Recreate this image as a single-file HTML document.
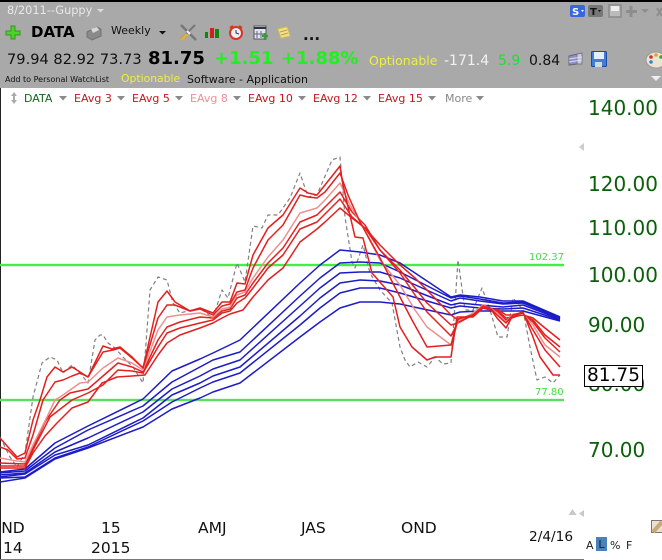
<!DOCTYPE html>
<html><head><meta charset="utf-8">
<style>
html,body{margin:0;padding:0;background:#fff}
#p{position:relative;width:662px;height:560px;overflow:hidden;background:#fff;font-family:"DejaVu Sans","Liberation Sans",sans-serif}
#p span{position:absolute;white-space:nowrap;line-height:1}
.ax{color:#0b5f0b;font-size:20px;left:588px}
.lg{font-size:11px;top:93px;color:#c8141e}
</style></head><body><div id="p">
<div style="position:absolute;left:0;top:0;width:662px;height:2px;background:#000"></div>
<div style="position:absolute;left:0;top:2px;width:662px;height:86px;background:#a9a9a9"></div>
<div style="position:absolute;left:0;top:88px;width:1px;height:472px;background:#222"></div>
<div style="position:absolute;left:0;top:559px;width:584px;height:1px;background:#777"></div>

<span style="left:7px;top:5px;font-size:11.3px;color:#e8e8e8">8/2011--Guppy</span>
<span style="left:31px;top:25px;font-size:15px;font-weight:bold;color:#000">DATA</span>
<span style="left:111px;top:25px;font-size:11px;color:#111">Weekly</span>
<span style="left:303px;top:28px;font-size:15px;font-weight:bold;color:#111">...</span>
<span style="left:7px;top:53px;font-size:14.6px;color:#111">79.94 82.92 73.73</span>
<span style="left:148px;top:50px;font-size:18px;font-weight:bold;color:#000">81.75</span>
<span style="left:214px;top:50px;font-size:18px;font-weight:bold;color:#22ee22">+1.51</span>
<span style="left:281px;top:50px;font-size:18px;font-weight:bold;color:#22ee22">+1.88%</span>
<span style="left:369px;top:55px;font-size:12.5px;color:#eeee44">Optionable</span>
<span style="left:444px;top:54px;font-size:14px;color:#f2f2f2">-171.4</span>
<span style="left:498px;top:54px;font-size:14px;color:#22dd33">5.9</span>
<span style="left:529px;top:54px;font-size:14px;color:#111">0.84</span>
<span style="left:5px;top:76px;font-size:8px;color:#111">Add to Personal WatchList</span>
<span style="left:121px;top:74px;font-size:10.8px;color:#eeee44">Optionable</span>
<span style="left:187px;top:74px;font-size:11px;color:#111">Software - Application</span>

<span class="lg" style="left:24px;color:#0a6a1a">DATA</span>
<span class="lg" style="left:74px">EAvg 3</span>
<span class="lg" style="left:132px">EAvg 5</span>
<span class="lg" style="left:190px;color:#ee8f96">EAvg 8</span>
<span class="lg" style="left:248px">EAvg 10</span>
<span class="lg" style="left:313px">EAvg 12</span>
<span class="lg" style="left:378px">EAvg 15</span>
<span class="lg" style="left:445px;color:#888">More</span>

<span class="ax" style="top:98px">140.00</span>
<span class="ax" style="top:174px">120.00</span>
<span class="ax" style="top:218px">110.00</span>
<span class="ax" style="top:265px">100.00</span>
<span class="ax" style="top:315px">90.00</span>
<span class="ax" style="top:374px">80.00</span>
<span class="ax" style="top:440px">70.00</span>
<span style="left:584px;top:365px;width:57px;height:20px;border:1px solid #000;background:#fff;font-size:18.5px;line-height:20px;text-align:center;color:#000">81.75</span>

<span style="left:529px;top:253px;font-size:10px;color:#44dd44">102.37</span>
<span style="left:535px;top:388px;font-size:10px;color:#44dd44">77.80</span>

<span style="left:-11px;top:521px;font-size:15.5px;color:#111">OND</span>
<span style="left:3px;top:541px;font-size:15.5px;color:#111">14</span>
<span style="left:101px;top:521px;font-size:15.5px;color:#111">15</span>
<span style="left:91px;top:541px;font-size:15.5px;color:#111">2015</span>
<span style="left:198px;top:521px;font-size:15.5px;color:#111">AMJ</span>
<span style="left:301px;top:521px;font-size:15.5px;color:#111">JAS</span>
<span style="left:401px;top:521px;font-size:15.5px;color:#111">OND</span>
<span style="left:529px;top:531px;font-size:13.7px;color:#111">2/4/16</span>
<span style="left:586px;top:540px;font-size:11px;color:#222">A</span>
<span style="left:596px;top:537px;width:11px;height:14px;background:#4a82b8;font-size:11px;line-height:15px;text-align:center;color:#123">L</span>
<span style="left:610px;top:540px;font-size:11px;color:#222">%</span>
<span style="left:626px;top:540px;font-size:11px;color:#222">F</span>

<svg width="662" height="560" style="position:absolute;left:0;top:0">
<!-- header icons -->
<path d="M11 26h4v5h5v4h-5v4h-4v-4H6v-4h5z" fill="#4fd02a" stroke="#2f9a1c" stroke-width="1"/>
<path d="M87 32l10-5 4 2v7l-9 4-5-3z" fill="#8a8a8a" stroke="#727272"/><path d="M91 29l6-2 2 3-6 3z" fill="#d8d8d8"/>
<path d="M159 31h7l-3.500 3.500z" fill="#111"/><path d="M97 9h7l-3.500 3.500z" fill="#ddd"/>
<path d="M181 25l6 6M190 34l6 6" stroke="#777" stroke-width="2.500" fill="none"/><path d="M195 25l-14 14" stroke="#777" stroke-width="2"/><path d="M181 40l6-6" stroke="#e0b030" stroke-width="3"/><path d="M187 31l3 3" stroke="#eee" stroke-width="2"/>
<rect x="205" y="32" width="3" height="6" fill="#0a8a0a"/><rect x="210" y="28" width="4" height="10" fill="#d02020"/><rect x="215" y="29" width="4" height="9" fill="#0a8a0a"/>
<circle cx="236" cy="33" r="6" fill="#eef" stroke="#d8351a" stroke-width="2"/><path d="M236 30v3l3 1" stroke="#333" fill="none"/><path d="M230 28l3-2M242 28l-3-2" stroke="#d8351a" stroke-width="2"/>
<rect x="254" y="26" width="12" height="13" fill="#dfe6f0" stroke="#556"/><path d="M254 28h12" stroke="#334" stroke-width="2"/><path d="M257 31v7M261 31v7M254 34h12" stroke="#667"/><path d="M262 36h6M265 33v7" stroke="#3a9a3a" stroke-width="2.500"/>
<path d="M278 29l9-2 3 9-9 2z" fill="#f1e28a" stroke="#d6c050"/><path d="M280 32l7-2M281 35l7-2" stroke="#b8a040"/>
<rect x="570" y="5" width="15" height="12" rx="2" fill="#3a66dd"/><text x="572" y="15" font-size="10" font-weight="bold" fill="#fff" font-family="DejaVu Sans">S</text><path d="M581 10h3l-1.500 2z" fill="#fff"/>
<rect x="588" y="5" width="15" height="12" rx="2" fill="#777"/><text x="590" y="15" font-size="10" font-weight="bold" fill="#111" font-family="DejaVu Sans">T</text><path d="M598 10h3l-1.500 2z" fill="#111"/>
<rect x="609" y="5" width="12" height="12" fill="#bbb" stroke="#8a8a8a" stroke-width="1.500"/><rect x="611" y="6" width="8" height="5" fill="#eee"/>
<path d="M631 6v11M626 11.500h11" stroke="#8d8d8d" stroke-width="3"/><path d="M641 9h8l-4 4z" fill="#8d8d8d"/><path d="M657 8l5 8M662 8l-5 8" stroke="#8d8d8d" stroke-width="2"/>
<path d="M569 56l8-2v10l-8 1z" fill="#8f8fc8" stroke="#667"/><path d="M577 54l5-1v11l-5 0z" fill="#c8c8e6" stroke="#778"/><path d="M569 59l13-2M569 62l13-2" stroke="#dde"/>
<rect x="591.500" y="51.500" width="15" height="15" rx="1" fill="#3f7fdc" stroke="#224a99"/><rect x="594" y="52" width="10" height="7" fill="#e6eefc"/><rect x="595" y="62" width="7" height="5" fill="#cdd"/>
<ellipse cx="656" cy="60" rx="10" ry="8" fill="#ece4d0" stroke="#999"/><circle cx="651" cy="57" r="1.800" fill="#c33"/><circle cx="656" cy="55" r="1.800" fill="#ca3"/><circle cx="661" cy="57" r="1.800" fill="#3a3"/><circle cx="651" cy="62" r="1.800" fill="#38c"/>
<path d="M651 76h10l-5 5z" fill="#eee"/>
<!-- legend -->
<path d="M14 92l-3 4h6zM14 104l-3-4h6z" fill="#aaa"/><rect x="13" y="95" width="2" height="6" fill="#aaa"/>
<g fill="#8a8a8a"><path d="M59 96h8l-4 4.500zM117 96h8l-4 4.500zM175 96h8l-4 4.500zM233 96h8l-4 4.500zM298 96h8l-4 4.500zM363 96h8l-4 4.500zM428 96h8l-4 4.500zM476 96h8l-4 4.500z"/></g>
<path d="M584 143l-5 4 5 4z" fill="#ccc"/>
<path d="M572.500 509l-4 6h8zM584 510l-5 3.500 5 3.500z" fill="#c8c8c8"/>
<rect x="651.500" y="520.500" width="11" height="12" fill="#e8e0d0" stroke="#777"/><path d="M653 532l9-10" stroke="#c9a872" stroke-width="4"/>

<!-- green lines -->
<rect x="0" y="263" width="564" height="4" fill="#44ee44" opacity=".2"/>
<rect x="0" y="264" width="564" height="2" fill="#44ee44"/>
<rect x="0" y="398" width="564" height="4" fill="#5ae05a" opacity=".2"/>
<rect x="0" y="399" width="564" height="2" fill="#5ae05a"/>

<g fill="none" stroke-linejoin="round">
<polyline stroke="#808080" stroke-width="1.200" stroke-dasharray="4 3" points="0,437 10,457 17,467 25,453 33,397 42,363 50,357 57,360 63,373 72,365 80,373 88,383 95,340 100,335 103,335 108,343 115,348 123,357 133,367 143,383 150,290 158,277 167,280 173,303 180,313 200,308 213,318 222,290 228,298 237,263 245,282 253,226 262,228 268,215 278,215 290,198 300,173 308,197 317,195 332,160 340,157 345,217 352,262 355,268 363,245 370,273 380,290 392,303 400,347 405,360 410,367 418,362 427,367 435,357 443,364 451,363 458,260 465,310 473,310 482,288 490,310 498,337 507,337 513,298 523,310 530,347 537,380 545,377 553,383 560,375"/>

<g stroke="#1c1cc8" stroke-width="1.500">
<polyline points="0,472 25,469 55,443 88,426 143,399 172,371 200,359 213,353 240,340 300,283 320,265 340,250 360,252 380,255 400,263 451,297 460,295 480,297 503,301 523,301 560,317"/>
<polyline points="0,473 25,471 55,448 88,430 143,406 172,382 200,367 213,360 240,352 300,296 320,278 340,263 360,262 380,263 400,272 451,298 460,296 480,299 503,303 523,302 560,318"/>
<polyline points="0,475 25,473 55,452 88,438 143,412 172,389 200,376 213,369 240,360 300,306 320,288 340,273 360,272 380,272 400,278 451,301 460,298 480,301 503,304 523,303 560,318"/>
<polyline points="0,477 25,474 55,455 88,445 143,418 172,395 200,383 213,376 240,367 300,316 320,298 340,283 360,280 380,281 400,285 451,305 460,303 480,305 503,307 523,305 560,319"/>
<polyline points="0,478 25,477 55,458 88,447 143,421 172,402 200,388 213,382 240,373 300,325 320,308 340,293 360,288 380,288 400,293 451,308 460,306 480,308 503,309 523,308 560,320"/>
<polyline points="0,482 25,478 55,459 88,448 143,427 172,409 200,398 213,392 240,383 300,337 320,322 340,308 360,302 380,302 400,304 451,315 460,312 480,311 503,311 523,311 560,321"/>
</g>

<g stroke="#e2201f" stroke-width="1.500">
<polyline points="0,468 25,468 33,453 45,436 57,423 72,408 88,402 102,383 117,377 132,376 145,375 158,355 167,343 180,335 200,328 213,323 222,318 230,314 243,310 253,297 268,280 283,268 300,242 317,229 325,222 340,208 352,218 365,228 380,245 400,265 415,278 427,290 451,315 458,320 473,316 483,308 490,310 497,309 506,315 523,315 533,318 545,328 560,340"/>
<polyline points="0,466 25,466 33,450 50,417 72,400 88,393 103,385 118,370 132,371 143,373 158,347 167,333 180,328 200,323 213,320 222,313 230,311 237,303 245,298 253,288 268,268 283,255 300,229 317,222 325,214 340,199 352,217 365,228 380,250 400,270 415,288 427,303 451,325 458,323 473,315 483,306 490,309 497,310 506,318 523,315 533,320 545,335 560,347"/>
<polyline points="0,463 25,464 33,448 45,422 60,400 70,393 88,389 103,376 118,363 132,367 143,372 158,340 167,327 180,322 200,317 213,318 222,311 230,309 237,298 245,295 253,283 268,263 283,248 300,222 317,215 325,207 340,192 352,212 365,225 380,250 400,273 415,295 427,312 451,336 458,322 473,314 483,305 490,308 497,311 506,320 523,314 533,322 545,338 560,352"/>
<polyline stroke="#ef8f8f" points="0,458 17,461 25,462 33,445 47,417 55,400 63,395 80,383 88,382 103,368 118,358 132,363 143,370 158,330 167,317 180,315 200,313 213,317 222,309 230,307 237,295 245,292 253,278 268,257 283,240 300,213 317,208 325,200 340,183 350,205 362,225 380,260 400,285 415,310 427,327 451,345 458,321 473,313 483,305 490,308 497,313 506,322 513,314 523,314 533,325 545,345 560,357"/>
<polyline points="0,447 8,450 17,459 25,458 33,435 43,400 55,382 63,380 72,376 80,373 88,377 103,352 113,350 120,348 132,358 143,368 158,318 167,305 175,305 190,311 200,309 213,315 222,306 230,304 237,292 245,290 253,268 268,240 283,225 300,195 308,197 317,198 325,192 340,173 348,195 360,222 380,258 400,297 412,320 427,347 451,345 458,319 473,315 483,306 490,308 497,315 506,323 513,315 523,313 533,330 545,350 560,367"/>
<polyline points="0,438 8,447 17,457 25,453 33,420 40,400 47,377 55,367 63,372 72,367 88,377 103,346 112,349 120,347 132,357 143,368 158,302 167,291 175,302 190,311 200,308 213,313 222,302 230,302 237,283 245,284 253,255 268,228 283,215 300,188 308,193 317,195 325,185 340,166 343,185 355,237 363,238 372,273 393,297 400,327 412,347 427,360 435,357 451,357 457,317 473,317 483,308 490,308 497,318 506,328 513,315 523,312 533,337 540,357 553,375 560,375"/>
</g>
</g>
</svg>
</div></body></html>
